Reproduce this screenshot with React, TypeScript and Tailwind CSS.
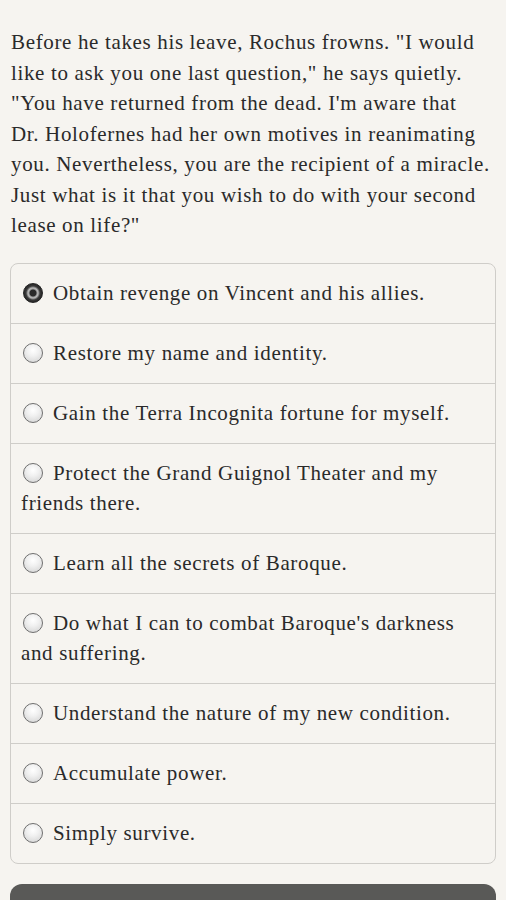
import React from "react";

const options: { text: React.ReactNode; selected?: boolean }[] = [
  { text: "Obtain revenge on Vincent and his allies.", selected: true },
  { text: "Restore my name and identity." },
  { text: "Gain the Terra Incognita fortune for myself." },
  { text: <>Protect the Grand Guignol Theater and my<br />friends there.</> },
  { text: "Learn all the secrets of Baroque." },
  { text: <>Do what I can to combat Baroque's darkness<br />and suffering.</> },
  { text: "Understand the nature of my new condition." },
  { text: "Accumulate power." },
  { text: "Simply survive." },
];

function Radio({ selected }: { selected?: boolean }) {
  if (selected) {
    return (
      <span className="inline-block align-[-3px] mr-[10px] ml-[2px] w-[20px] h-[20px] rounded-full bg-[radial-gradient(circle_at_50%_50%,#2a2a2a_0,#2a2a2a_3px,#9a9a9a_4px,#bdbdbd_5px,#3a3a3a_7px,#1f1f1f_10px)] border border-[#222]" />
    );
  }
  return (
    <span className="inline-block align-[-3px] mr-[10px] ml-[2px] w-[20px] h-[20px] rounded-full border-[1.5px] border-[#6f6f6f] bg-[radial-gradient(circle_at_50%_35%,#ffffff_0,#f0f0f0_40%,#cfcfcf_100%)]" />
  );
}

export default function App() {
  return (
    <div
      className="min-h-[900px] bg-[#f6f4f0] text-[#2a2a2a] px-[10px] pt-[27px] tracking-[0.65px]"
      style={{ fontFamily: '"Liberation Serif", "Times New Roman", serif' }}
    >
      <p className="text-[21px] leading-[30.5px] px-[1px]">
        Before he takes his leave, Rochus frowns. "I would<br />
        like to ask you one last question," he says quietly.<br />
        "You have returned from the dead. I'm aware that<br />
        Dr. Holofernes had her own motives in reanimating<br />
        you. Nevertheless, you are the recipient of a miracle.<br />
        Just what is it that you wish to do with your second<br />
        lease on life?"
      </p>
      <div className="mt-[22px] border border-[#cfcdc9] rounded-[8px] overflow-hidden">
        {options.map((o, i) => (
          <div
            key={i}
            className={`px-[10px] py-[14.5px] text-[21px] leading-[30px] ${i > 0 ? "border-t border-[#cfcdc9]" : ""}`}
          >
            <Radio selected={o.selected} />
            {o.text}
          </div>
        ))}
      </div>
      <div className="mt-[20px] h-[60px] rounded-t-[12px] bg-[#595957]" />
    </div>
  );
}
